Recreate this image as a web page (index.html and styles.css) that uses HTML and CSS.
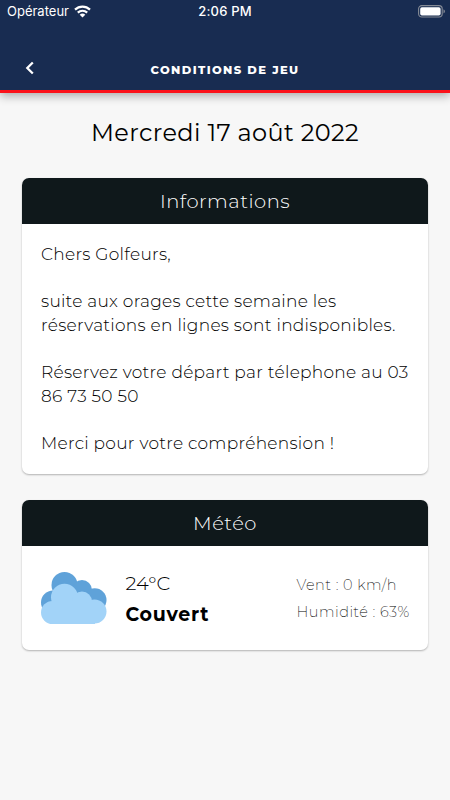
FILE: index.html
```html
<!DOCTYPE html>
<html lang="fr">
<head>
<meta charset="utf-8">
<title>Conditions de jeu</title>
<link rel="stylesheet" href="styles.css">
</head>
<body>
<header class="header">
  <div class="status">
    <div class="carrier"><span>Opérateur</span>
      <svg width="17" height="13" viewBox="0 0 17 13"><g fill="none" stroke="#fff" stroke-width="2.2"><path d="M1 4.6C5.2.5 11.8.5 16 4.6"/><path d="M3.8 7.6c2.6-2.5 6.8-2.5 9.4 0"/></g><path d="M5.7 9.7c1.6-1.5 4-1.5 5.6 0L8.5 12.5z" fill="#fff"/></svg>
    </div>
    <div class="time">2:06 PM</div>
    <div class="battery"><svg width="28" height="13" viewBox="0 0 28 13"><rect x=".6" y=".6" width="23.6" height="11.4" rx="3.2" fill="none" stroke="#858b96" stroke-width="1.1"/><rect x="2.2" y="2.2" width="20.4" height="8.2" rx="1.7" fill="#fff"/><path d="M25.5 4.2c2 .8 2 3.4 0 4.2z" fill="#858b96"/></svg></div>
  </div>
  <div class="nav">
    <svg class="back" width="10" height="14" viewBox="0 0 10 14"><path d="M7.8 1.5 2.3 7l5.5 5.5" fill="none" stroke="#fff" stroke-width="2.3"/></svg>
    <h1 class="title">CONDITIONS DE JEU</h1>
  </div>
</header>
<main class="content">
  <h2 class="date">Mercredi 17 août 2022</h2>
  <section class="card info">
    <h3 class="card-head">Informations</h3>
    <div class="message">
      <p>Chers Golfeurs,</p>
      <p>suite aux orages cette semaine les<br>réservations en lignes sont indisponibles.</p>
      <p>Réservez votre départ par télephone au 03<br>86 73 50 50</p>
      <p>Merci pour votre compréhension !</p>
    </div>
  </section>
  <section class="card weather">
    <h3 class="card-head">Météo</h3>
    <div class="forecast">
      <svg class="cloud" width="66" height="52" viewBox="0 0 66 52"><g fill="#5fa2d9"><circle cx="23.5" cy="13" r="13"/><circle cx="41" cy="18" r="10"/><circle cx="53.7" cy="28" r="11.8"/><circle cx="12" cy="30.5" r="12"/><path d="M12 20h30v16H12z"/></g><g fill="#a2d3f8"><circle cx="23.5" cy="25.2" r="13.5"/><circle cx="41" cy="29.5" r="10"/><circle cx="53.5" cy="39.5" r="12"/><circle cx="11.5" cy="40.5" r="11.5"/><path d="M11.5 29H45v11h9v12H11.5z"/></g></svg>
      <div class="now"><div class="temp">24°C</div><div class="state">Couvert</div></div>
      <div class="details"><div>Vent : 0 km/h</div><div>Humidité : 63%</div></div>
    </div>
  </section>
</main>
</body>
</html>
```

FILE: styles.css
```css
* { box-sizing: border-box; }
body { margin: 0; min-height: 800px; background: #f7f7f7; color: #000; font-family: Montserrat, Inter, sans-serif; }
h1, h2, h3, p { margin: 0; font-weight: 400; }
svg { display: block; }
.header { height: 93px; background: #182c51; border-bottom: 3px solid #fb1119; color: #fff; box-shadow: 0 3px 9px rgba(0,0,0,.32); }
.status { height: 22px; display: grid; grid-template-columns: 1fr auto 1fr; align-items: center; padding: 0 4px 0 7px; font: 400 13px/22px Inter, sans-serif; }
.carrier { display: flex; align-items: center; gap: 5px; }
.time { font-weight: 500; letter-spacing: .2px; margin-left: -3px; }
.battery { justify-self: end; }
.nav { height: 68px; display: grid; grid-template-columns: 50px 1fr 50px; align-items: center; padding-top: 27px; }
.back { margin: -3px 0 0 25px; }
.title { text-align: center; font-size: 11.5px; font-weight: 800; letter-spacing: 1.4px; line-height: 20px; white-space: nowrap; }
.content { padding: 24px 22px 0; }
.date { text-align: center; font-size: 24px; line-height: 32px; letter-spacing: .36px; white-space: nowrap; }
.card { background: #fff; border-radius: 7px; overflow: hidden; box-shadow: 0 1px 2px rgba(0,0,0,.28); }
.info { height: 296px; margin-top: 29px; }
.weather { height: 150px; margin-top: 26px; }
.card-head { height: 46px; background: #0f181b; color: #fff; text-align: center; font-size: 19.5px; font-weight: 300; line-height: 46px; letter-spacing: .5px; }
.message { padding: 19.4px 19px; font-size: 17px; line-height: 23.55px; letter-spacing: .27px; white-space: nowrap; }
.message p { font-weight: 300; }
.message p + p { margin-top: 23.5px; }
.forecast { height: 104px; padding: 0 19px; display: grid; grid-template-columns: 66px 171px 1fr; align-items: center; }
.now { padding: 2px 0 0 18.5px; }
.temp { font-size: 19.5px; font-weight: 300; line-height: 32px; }
.state { font-size: 19px; font-weight: 700; line-height: 32px; letter-spacing: .7px; }
.details { padding: 1px 0 0 18.5px; font-size: 14.5px; font-weight: 200; line-height: 27px; letter-spacing: .5px; white-space: nowrap; }
```
